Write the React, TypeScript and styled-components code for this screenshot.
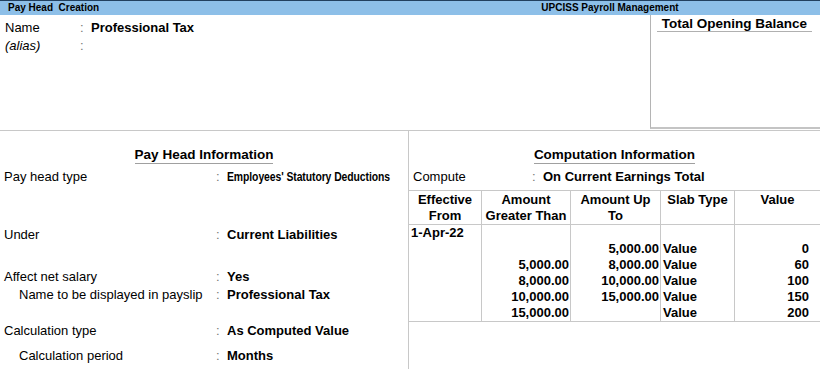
import React from "react";
import styled, { createGlobalStyle } from "styled-components";

const GlobalStyle = createGlobalStyle`
  html, body {
    margin: 0;
    padding: 0;
    background: #ffffff;
  }
  body {
    font-family: "Liberation Sans", Arial, sans-serif;
    color: #000;
  }
`;

const rows = [
  { label: "Pay head type", value: "Employees' Statutory Deductions", narrow: true, gap: 5 },
  { label: "Under", value: "Current Liabilities", gap: 42 },
  { label: "Affect net salary", value: "Yes", gap: 26 },
  { label: "Name to be displayed in payslip", value: "Professional Tax", indent: true, gap: 2 },
  { label: "Calculation type", value: "As Computed Value", gap: 20 },
  { label: "Calculation period", value: "Months", indent: true, gap: 9 },
];

const slabs = [
  ["1-Apr-22", "", "", "", ""],
  ["", "", "5,000.00", "Value", "0"],
  ["", "5,000.00", "8,000.00", "Value", "60"],
  ["", "8,000.00", "10,000.00", "Value", "100"],
  ["", "10,000.00", "15,000.00", "Value", "150"],
  ["", "15,000.00", "", "Value", "200"],
];

const heads = [
  ["Effective", "From"],
  ["Amount", "Greater Than"],
  ["Amount Up", "To"],
  ["Slab Type"],
  ["Value"],
];

export default function App() {
  return (
    <Screen>
      <GlobalStyle />
      <TitleBar>
        <TitleLeft>Pay Head&nbsp; Creation</TitleLeft>
        <TitleCompany>UPCISS Payroll Management</TitleCompany>
      </TitleBar>

      <TopSection>
        <NameArea>
          <NameRow>
            <NameLabel>Name</NameLabel>
            <Colon>:</Colon>
            <NameValue>Professional Tax</NameValue>
          </NameRow>
          <NameRow>
            <NameLabel italic>(alias)</NameLabel>
            <Colon>:</Colon>
          </NameRow>
        </NameArea>
        <BalanceBox>
          <BalanceTitle>Total Opening Balance</BalanceTitle>
        </BalanceBox>
      </TopSection>

      <LowerSection>
        <InfoPanel>
          <HeadingWrap>
            <Heading>Pay Head Information</Heading>
          </HeadingWrap>
          {rows.map((r) => (
            <InfoRow key={r.label} gap={r.gap}>
              <InfoLabel indent={r.indent}>{r.label}</InfoLabel>
              <Colon>:</Colon>
              <InfoValue narrow={r.narrow}>{r.value}</InfoValue>
            </InfoRow>
          ))}
        </InfoPanel>

        <ComputePanel>
          <HeadingWrap>
            <Heading>Computation Information</Heading>
          </HeadingWrap>
          <ComputeRow>
            <ComputeLabel>Compute</ComputeLabel>
            <Colon>:</Colon>
            <InfoValue>On Current Earnings Total</InfoValue>
          </ComputeRow>
          <SlabTable>
            {heads.map((h, i) => (
              <HeadCell key={i} last={i === heads.length - 1}>
                {h.map((line) => (
                  <div key={line}>{line}</div>
                ))}
              </HeadCell>
            ))}
            {slabs.map((row, ri) =>
              row.map((cell, ci) => (
                <BodyCell
                  key={`${ri}-${ci}`}
                  align={ci === 0 || ci === 3 ? "left" : "right"}
                  last={ci === row.length - 1}
                  bottom={ri === slabs.length - 1}
                >
                  {cell}
                </BodyCell>
              ))
            )}
          </SlabTable>
        </ComputePanel>
      </LowerSection>
    </Screen>
  );
}

const Screen = styled.div`
  width: 820px;
  height: 369px;
  overflow: hidden;
  background: #fff;
  display: flex;
  flex-direction: column;
`;

const TitleBar = styled.div`
  height: 14px;
  border-top: 1px solid #22405f;
  background: #8dbfe8;
  display: flex;
  align-items: center;
  font-size: 10px;
  font-weight: bold;
  line-height: 14px;
`;

const TitleLeft = styled.div`
  width: 400px;
  padding-left: 8px;
  box-sizing: border-box;
  white-space: pre;
`;

const TitleCompany = styled.div`
  flex: 1;
  text-align: center;
`;

const TopSection = styled.div`
  height: 115px;
  display: flex;
  border-bottom: 1px solid #c8c8c8;
`;

const NameArea = styled.div`
  flex: 1;
  padding: 4px 0 0 5px;
`;

const NameRow = styled.div`
  display: flex;
  line-height: 18px;
  height: 18px;
  font-size: 13px;
`;

const NameLabel = styled.div<{ italic?: boolean }>`
  width: 75px;
  flex-shrink: 0;
  font-style: ${(p) => (p.italic ? "italic" : "normal")};
`;

const Colon = styled.span`
  color: #777;
  width: 11px;
  flex-shrink: 0;
`;

const NameValue = styled.div`
  font-weight: bold;
`;

const BalanceBox = styled.div`
  box-sizing: border-box;
  width: 170px;
  height: 114px;
  border-left: 1px solid #b4b4b4;
  border-bottom: 2px solid #c4c4c4;
  padding: 1px 8px 0 6px;
`;

const BalanceTitle = styled.div`
  font-size: 13.5px;
  font-weight: bold;
  line-height: 15px;
  text-align: center;
  border-bottom: 1px solid #b0b0b0;
`;

const LowerSection = styled.div`
  flex: 1;
  display: flex;
  font-size: 13px;
`;

const InfoPanel = styled.div`
  width: 408px;
  border-right: 1px solid #c8c8c8;
  padding-top: 16px;
`;

const ComputePanel = styled.div`
  flex: 1;
  padding-top: 16px;
`;

const HeadingWrap = styled.div`
  text-align: center;
`;

const Heading = styled.span`
  display: inline-block;
  font-weight: bold;
  font-size: 13.5px;
  line-height: 16px;
  border-bottom: 1px solid #a0a0a0;
`;

const InfoRow = styled.div<{ gap: number }>`
  display: flex;
  line-height: 16px;
  margin-top: ${(p) => p.gap}px;
`;

const InfoLabel = styled.div<{ indent?: boolean }>`
  flex-shrink: 0;
  width: ${(p) => (p.indent ? 197 : 212)}px;
  padding-left: ${(p) => (p.indent ? 19 : 4)}px;
`;

const InfoValue = styled.div<{ narrow?: boolean }>`
  font-weight: bold;
  white-space: nowrap;
  transform: ${(p) => (p.narrow ? "scaleX(0.8)" : "none")};
  transform-origin: left center;
  letter-spacing: ${(p) => (p.narrow ? "-0.1px" : "normal")};
`;

const ComputeRow = styled.div`
  display: flex;
  line-height: 16px;
  margin-top: 5px;
`;

const ComputeLabel = styled.div`
  width: 119px;
  padding-left: 4px;
`;

const SlabTable = styled.div`
  margin-top: 5px;
  display: grid;
  grid-template-columns: 73px 89px 90px 74px 1fr;
  border-top: 1px solid #c8c8c8;
  font-weight: bold;
`;

const HeadCell = styled.div<{ last?: boolean }>`
  height: 32px;
  padding-top: 1px;
  line-height: 16px;
  text-align: center;
  border-right: ${(p) => (p.last ? "none" : "1px solid #c8c8c8")};
  border-bottom: 1px solid #c8c8c8;
  white-space: nowrap;
`;

const BodyCell = styled.div<{ align: string; last?: boolean; bottom?: boolean }>`
  height: 16px;
  line-height: 16px;
  text-align: ${(p) => p.align};
  padding: ${(p) => (p.last ? "0 11px 0 0" : "0 1px 0 2px")};
  border-right: ${(p) => (p.last ? "none" : "1px solid #c8c8c8")};
  border-bottom: ${(p) => (p.bottom ? "1px solid #c8c8c8" : "none")};
  white-space: nowrap;
`;
